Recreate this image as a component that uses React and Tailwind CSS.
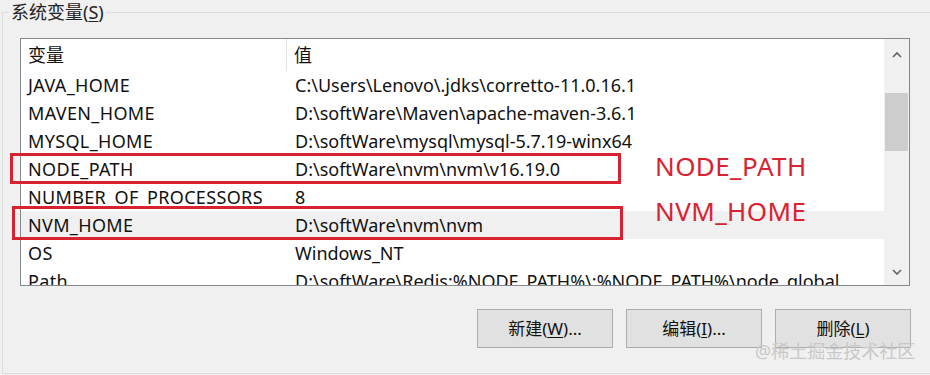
import React from "react";

const rows = [
  ["JAVA_HOME", "C:\\Users\\Lenovo\\.jdks\\corretto-11.0.16.1"],
  ["MAVEN_HOME", "D:\\softWare\\Maven\\apache-maven-3.6.1"],
  ["MYSQL_HOME", "D:\\softWare\\mysql\\mysql-5.7.19-winx64"],
  ["NODE_PATH", "D:\\softWare\\nvm\\nvm\\v16.19.0"],
  ["NUMBER_OF_PROCESSORS", "8"],
  ["NVM_HOME", "D:\\softWare\\nvm\\nvm"],
  ["OS", "Windows_NT"],
  ["Path", "D:\\softWare\\Redis;%NODE_PATH%\\;%NODE_PATH%\\node_global"],
];

const font = { fontFamily: "'Noto Sans', 'Noto Sans CJK SC', sans-serif" };

export default function App() {
  return (
    <div
      className="relative w-[930px] h-[375px] overflow-hidden bg-[#f0f0f0] text-[#111]"
      style={font}
    >
      <fieldset className="ml-[2px] h-[374px] border border-r-0 border-[#dcdcdc]">
        <legend className="ml-[6px] px-[2px] text-[18px] leading-[24px] text-[#222]">
          系统变量(<span className="underline underline-offset-2">S</span>)
        </legend>
        <div className="ml-[17px] mt-[14px] w-[890px] h-[248px] border border-[#828790] bg-white flex overflow-hidden">
          <div className="flex-1 flex flex-col text-[18px]">
            <div className="flex h-[32px] shrink-0 items-center">
              <div className="w-[266px] pl-[7px] border-r border-[#e5e5e5] h-full flex items-center">变量</div>
              <div className="pl-[7px]">值</div>
            </div>
            {rows.map(([k, v]) => (
              <div
                key={k}
                className={
                  "flex h-[28px] shrink-0 items-center whitespace-nowrap " +
                  (k === "NVM_HOME" ? "bg-[#f0f0f0]" : "")
                }
              >
                <div className="w-[267px] pl-[7px] tracking-[0.35px]">{k}</div>
                <div className="pl-[7px]">{v}</div>
              </div>
            ))}
          </div>
          <div className="w-[25px] shrink-0 bg-[#f0f0f0] flex flex-col items-center">
            <div className="h-[32px] w-full flex items-center justify-center">
              <svg width="10" height="6" viewBox="0 0 10 6">
                <path d="M1 5 L5 1 L9 5" stroke="#606060" strokeWidth="1.6" fill="none" />
              </svg>
            </div>
            <div className="h-[22px]" />
            <div className="h-[58px] w-[23px] bg-[#cdcdcd]" />
            <div className="flex-1" />
            <div className="h-[26px] w-full flex items-center justify-center">
              <svg width="10" height="6" viewBox="0 0 10 6">
                <path d="M1 1 L5 5 L9 1" stroke="#606060" strokeWidth="1.6" fill="none" />
              </svg>
            </div>
          </div>
        </div>
        <div className="mt-[23px] flex justify-end gap-[13px] pr-[19px] text-[17px]">
          {[
            ["新建(", "W", ")..."],
            ["编辑(", "I", ")..."],
            ["删除(", "L", ")"],
          ].map(([a, b, c]) => (
            <button
              key={a}
              className="w-[136px] h-[39px] border border-[#adadad] bg-[#e1e1e1] text-[#111]"
            >
              {a}
              <span className="underline underline-offset-2">{b}</span>
              {c}
            </button>
          ))}
        </div>
      </fieldset>

      <div className="absolute left-[10px] top-[153px] w-[611px] h-[31px] border-[3px] border-[#d9222f]" />
      <div className="absolute left-[12px] top-[206px] w-[611px] h-[34px] border-[3px] border-[#d9222f]" />
      <div className="absolute left-[655px] top-[149px] text-[26px] tracking-[0.4px] leading-[34px] text-[#d9222f]">NODE_PATH</div>
      <div className="absolute left-[655px] top-[194px] text-[26px] tracking-[0.4px] leading-[34px] text-[#d9222f]">NVM_HOME</div>
      <div
        className="absolute left-[755px] top-[339px] text-[18px] leading-[24px] text-[#c8c8c8]"
      >
        @稀土掘金技术社区
      </div>
    </div>
  );
}
